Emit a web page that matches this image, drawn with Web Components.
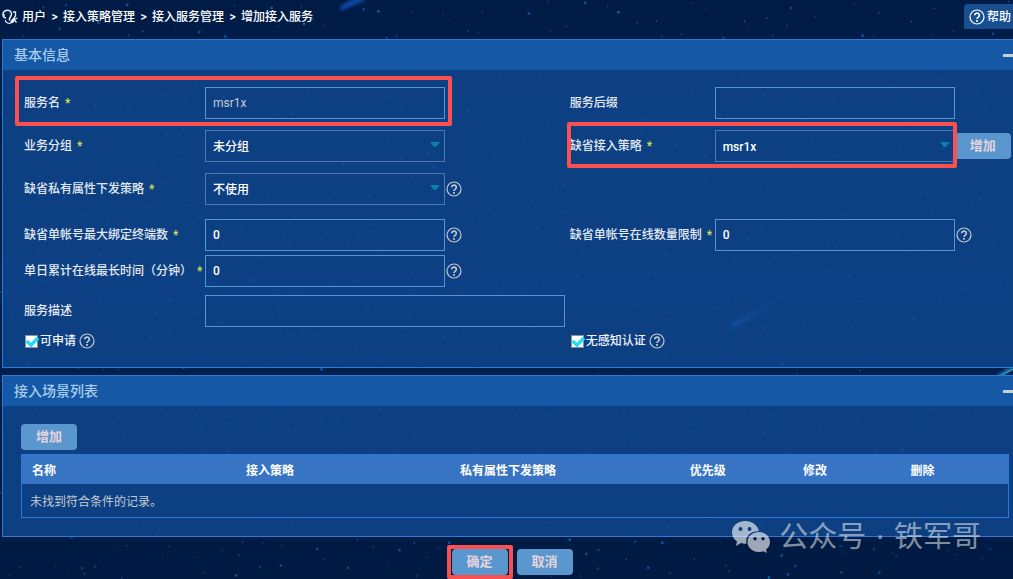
<!DOCTYPE html>
<html lang="zh-CN">
<head>
<meta charset="utf-8">
<title>增加接入服务</title>
<style>
html, body { margin: 0; min-height: 100%; background: #001e4a; }
body { font: 12px/16px Roboto, "Noto Sans CJK SC", sans-serif; color: #fff; overflow-x: hidden; }
</style>
</head>
<body>
<service-page></service-page>
<script>
const define = (name, html, setup) => {
  const tpl = document.createElement('template');
  tpl.innerHTML = html;
  customElements.define(name, class extends HTMLElement {
    constructor() {
      super();
      this.attachShadow({ mode: 'open' }).append(tpl.content.cloneNode(true));
    }
    connectedCallback() { if (setup) setup(this, this.shadowRoot); }
  });
};

/* Night sky: evenly scattered small stars and a few comets */
define('star-sky', `
<style>
:host { display: block; position: absolute; inset: 0; overflow: hidden; z-index: -1; background: linear-gradient(#001c46, #00204f 50%, #001a42); }
svg { width: 100%; height: 100%; display: block; }
</style>
<svg aria-hidden="true">
  <defs>
    <linearGradient id="c" x1="0" x2="1" y1="1" y2="0"><stop stop-color="#1560c4"/><stop offset="1" stop-color="#1560c4" stop-opacity="0"/></linearGradient>
    <filter id="b"><feGaussianBlur stdDeviation="1.5"/></filter>
  </defs>
  <g id="stars" fill="#0a70c4"></g>
  <path d="M341 11 Q338 6 345 3 L358 -4 L366 0 Z" fill="#0b45a0" filter="url(#b)"/>
  <path d="M731 328 Q729 323 738 320 L790 292 L742 324 Z" fill="url(#c)" filter="url(#b)"/>
  <path d="M998 376 L1013 368" stroke="#35a0d8" stroke-width="2" filter="url(#b)"/>
  <path d="M1002 375 L1013 369" stroke="#3fb0d8"/>
</svg>`, (host, root) => {
  const g = root.getElementById('stars');
  let seed = 71, out = '';
  const rnd = () => (seed = (seed * 16807) % 2147483647) / 2147483647;
  for (let y = 0; y < 600; y += 22) for (let x = 0; x < 1100; x += 28) {
    const o = .4 + rnd() * .5;
    out += `<circle cx="${(x + rnd() * 28).toFixed(1)}" cy="${(y + rnd() * 22).toFixed(1)}" r="${rnd() > .7 ? 1.3 : .8}" opacity="${o.toFixed(2)}"/>`;
  }
  g.innerHTML = out;
});

define('help-icon', `
<style>
:host { display: block; flex: none; width: 16px; height: 16px; }
svg { display: block; width: 16px; height: 16px; }
</style>
<svg viewBox="0 0 16 16" fill="none" stroke="currentColor" stroke-width="1.2" aria-hidden="true">
<circle cx="8" cy="8" r="7"/><path d="M5.700 6.300a2.300 2.200 0 1 1 3.600 1.800C8.400 8.700 8 9 8 10" stroke-width="1.700"/><path d="M8 11v1.700" stroke-width="1.800"/></svg>`);

define('crumb-bar', `
<style>
:host { display: flex; align-items: flex-start; justify-content: space-between; height: 39px; overflow: hidden; font-weight: 500; }
nav { display: flex; align-items: center; gap: 4px; padding: 9px 0 0 2px; }
svg { width: 16px; height: 16px; }
a { color: inherit; text-decoration: none; }
ol { display: flex; gap: 5px; margin: 0; padding: 0; list-style: none; }
.sep { width: 7px; text-align: center; }
button { display: flex; align-items: center; gap: 2px; height: 25px; margin: 4px 0 0; padding: 0 2px 0 5px; border: 0; border-radius: 4px 0 0 0; background: #174f90; color: #fff; font: inherit; }
</style>
<nav aria-label="位置">
  <svg viewBox="0 0 16 16" fill="none" stroke="#e8eef8" aria-hidden="true">
    <path d="M1.500 8C0 4 2 1.300 5.500 1.300S10.200 4 9 7L7.500 9.500v2" stroke-width="1.500"/>
    <path d="M2 5v3.500l2 .500M3.500 11c-.500 2 2 3.500 5 3.500" stroke-width="1.300"/>
    <path d="M11 3h2.500v4L9 13M15.500 9l-3.500 1.500 2.500 3" stroke-width="1.300"/>
    <path d="M8 14.500l1-3 3-2.500 1.500 2-2.500 3z" fill="#e8eef8" stroke="none"/>
  </svg>
  <ol><li><a href="#">用户</a></li><li class="sep">&gt;</li><li><a href="#">接入策略管理</a></li><li class="sep">&gt;</li><li><a href="#">接入服务管理</a></li><li class="sep">&gt;</li><li>增加接入服务</li></ol>
</nav>
<button type="button"><help-icon></help-icon>帮助</button>`);

define('fold-panel', `
<style>
:host { display: block; margin-left: 2px; border: 1px solid #2a7adb; border-right: 0; background: rgba(16, 72, 145, .8); }
header { display: flex; align-items: center; justify-content: space-between; height: 30px; padding-left: 11px; background: #1558a5; }
h2 { margin: 0; font-size: 14px; line-height: 20px; font-weight: 500; color: #a9cdee; }
button { width: 10px; height: 20px; padding: 0; border: 0; background: none; }
button::before { content: ""; display: block; height: 3px; background: #c9cdd4; }
</style>
<header><h2></h2><button type="button" aria-label="折叠"></button></header>
<slot></slot>`, (host, root) => { root.querySelector('h2').textContent = host.getAttribute('heading'); });

define('push-button', `
<style>
:host { display: block; flex: none; }
button { display: block; width: 56px; height: 26px; padding: 0; border: 0; border-radius: 4px; background: #5a97ce; color: #e6d4dc; font: bold 13px/24px Roboto, "Noto Sans CJK SC", sans-serif; }
</style>
<button type="button"><slot></slot></button>`);

/* Red rectangle drawn round the control it is placed in */
define('mark-frame', `
<style>
:host { display: block; position: absolute; inset: var(--mark, -4px); border: 4px solid #fc5050; border-radius: 2px; pointer-events: none; z-index: 2; }
</style>`);

define('form-field', `
<style>
:host { display: flex; align-items: center; position: relative; width: max-content; }
label { flex: none; width: var(--label, 181px); white-space: nowrap; color: #e4eaf2; font-weight: 500; }
label.req::after { content: "*"; margin-left: 5px; color: #dfe04a; }
.box { position: relative; flex: none; width: var(--field, 240px); }
input, select { display: block; box-sizing: border-box; width: 100%; height: 32px; margin: 0; padding: 0 7px; border: 1px solid #5596d2; border-radius: 0; outline: 0; appearance: none; background: transparent; color: #fff; font: 500 12px/16px Roboto, "Noto Sans CJK SC", sans-serif; }
select { border-color: #5078b0; padding: 2px 7px 0 7px; }
input.dim { color: #c8ccd2; font-weight: 400; }
svg { position: absolute; right: 5px; top: 12px; width: 10px; height: 6px; }
help-icon { margin-left: 1px; color: #c3c9d0; }
</style>
<label for="f"></label><div class="box"></div><slot></slot>`, (host, root) => {
  const has = n => host.hasAttribute(n), get = n => host.getAttribute(n) || '';
  const label = root.querySelector('label'), box = root.querySelector('.box');
  label.textContent = get('label');
  if (has('required')) label.className = 'req';
  if (has('select')) {
    box.innerHTML = '<select id="f"><option></option></select><svg viewBox="0 0 10 6" aria-hidden="true"><path d="M0 0h10L6 5H4z" fill="#0e7fac"/></svg>';
    box.querySelector('option').textContent = get('value');
  } else {
    box.innerHTML = '<input id="f" type="text">';
    box.firstChild.value = get('value');
    if (has('dim')) box.firstChild.className = 'dim';
  }
  if (has('help')) root.append(document.createElement('help-icon'));
});

define('tick-field', `
<style>
:host { display: flex; align-items: center; height: 16px; color: #f0f4fa; }
label { display: flex; align-items: center; gap: 2px; font-weight: 500; }
.tick { position: relative; width: 14px; height: 13px; }
input { display: block; box-sizing: border-box; width: 13px; height: 13px; margin: 0 0 0 1px; appearance: none; background: #fff; border: 1px solid #8a9099; }
svg { position: absolute; left: 1px; top: 1px; width: 14px; height: 12px; }
help-icon { margin-left: 3px; color: #c3c9d0; }
</style>
<label><span class="tick"><input type="checkbox" checked><svg viewBox="0 0 14 12" fill="none" stroke="#22dcf8" stroke-width="3.500" aria-hidden="true"><path d="M1.500 5l4.500 4L13 2"/></svg></span><slot></slot></label><help-icon></help-icon>`);

define('basic-form', `
<style>
:host { display: block; padding: 17px 0 18px 21px; }
.row { display: grid; grid-template-columns: 16fr 13fr; align-items: center; }
.group { display: grid; gap: 11px; margin-bottom: 14px; }
.tight { gap: 4px; margin-bottom: 8px; }
.right { --label: 145px; }
.with-button { display: flex; align-items: center; }
.name { --mark: -11px -7px -7px -9px; }
.policy { --mark: -8px -2px -6px -3px; }
.wide { --field: 360px; margin-bottom: 6px; }
</style>
<div class="group">
  <div class="row"><form-field class="name" label="服务名" required dim value="msr1x"><mark-frame></mark-frame></form-field><form-field class="right" label="服务后缀"></form-field></div>
  <div class="row"><form-field label="业务分组" required select value="未分组"></form-field><div class="right with-button"><form-field class="policy" label="缺省接入策略" required select value="msr1x"><mark-frame></mark-frame></form-field><push-button>增加</push-button></div></div>
  <div class="row"><form-field label="缺省私有属性下发策略" required select value="不使用" help></form-field></div>
</div>
<div class="group tight">
  <div class="row"><form-field label="缺省单帐号最大绑定终端数" required value="0" help></form-field><form-field class="right" label="缺省单帐号在线数量限制" required value="0" help></form-field></div>
  <div class="row"><form-field label="单日累计在线最长时间（分钟）" required value="0" help></form-field></div>
</div>
<form-field class="wide" label="服务描述"></form-field>
<div class="row"><tick-field>可申请</tick-field><tick-field>无感知认证</tick-field></div>`);

define('scene-table', `
<style>
:host { display: block; padding: 18px 4px 18px 18px; }
table { width: 100%; margin-top: 4px; table-layout: fixed; border-collapse: separate; border-spacing: 0; border: 1px solid #2a7adb; background: #0d4083; }
th { height: 27px; padding: 2px 0 0 10px; background: #3874c4; text-align: left; font-weight: 700; }
td { height: 31px; padding: 2px 8px 0; color: #c6cbd3; }
</style>
<push-button>增加</push-button>
<table>
<colgroup><col style="width:21.700%"><col style="width:21.700%"><col style="width:23.300%"><col style="width:11.500%"><col style="width:10.900%"><col></colgroup>
<thead><tr><th>名称</th><th>接入策略</th><th>私有属性下发策略</th><th>优先级</th><th>修改</th><th>删除</th></tr></thead>
<tbody><tr><td colspan="6">未找到符合条件的记录。</td></tr></tbody>
</table>`);

define('account-mark', `
<style>
:host { display: flex; align-items: center; gap: 8px; position: absolute; right: 32px; top: 517px; color: rgba(255, 255, 255, .52); font: 400 29px/40px "DejaVu Sans", "Noto Sans CJK SC", sans-serif; white-space: nowrap; }
svg { width: 40px; height: 34px; }
</style>
<svg viewBox="0 0 40 34" aria-hidden="true"><path fill="rgba(255,255,255,.62)" fill-rule="evenodd" d="M14 1C6.500 1 1 6 1 12.500c0 4 2 7 5 9L5 26l5-3c2 .6 3.500.8 5.500.7C14 16 20 11 28 11 26.500 5 21 1 14 1zM9.500 7a2 2 0 1 1 0 4 2 2 0 0 1 0-4zm9 0a2 2 0 1 1 0 4 2 2 0 0 1 0-4zM28 12c-6.500 0-11.500 4.500-11.500 10S21.500 32 28 32c1.500 0 3-.2 4.500-.8L36 33l-1-3.500c2.500-2 4-4.500 4-7.500 0-5.500-5-10-11-10zm-4 5a1.700 1.700 0 1 1 0 3.400 1.700 1.700 0 0 1 0-3.400zm8 0a1.700 1.700 0 1 1 0 3.400 1.700 1.700 0 0 1 0-3.400z"/></svg><span>公众号 · 铁军哥</span>`);

define('service-page', `
<style>
:host { display: block; position: relative; min-height: 100vh; overflow: hidden; z-index: 0; }
main { display: grid; gap: 7px; }
footer { display: flex; justify-content: center; gap: 9px; padding: 12px 0 4px 11px; }
.ok { position: relative; --mark: -4px -5px; }
</style>
<star-sky></star-sky>
<crumb-bar></crumb-bar>
<main>
  <fold-panel heading="基本信息"><basic-form></basic-form></fold-panel>
  <fold-panel heading="接入场景列表"><scene-table></scene-table></fold-panel>
</main>
<footer><div class="ok"><push-button>确定</push-button><mark-frame></mark-frame></div><push-button>取消</push-button></footer>
<account-mark></account-mark>`);
</script>
</body>
</html>
